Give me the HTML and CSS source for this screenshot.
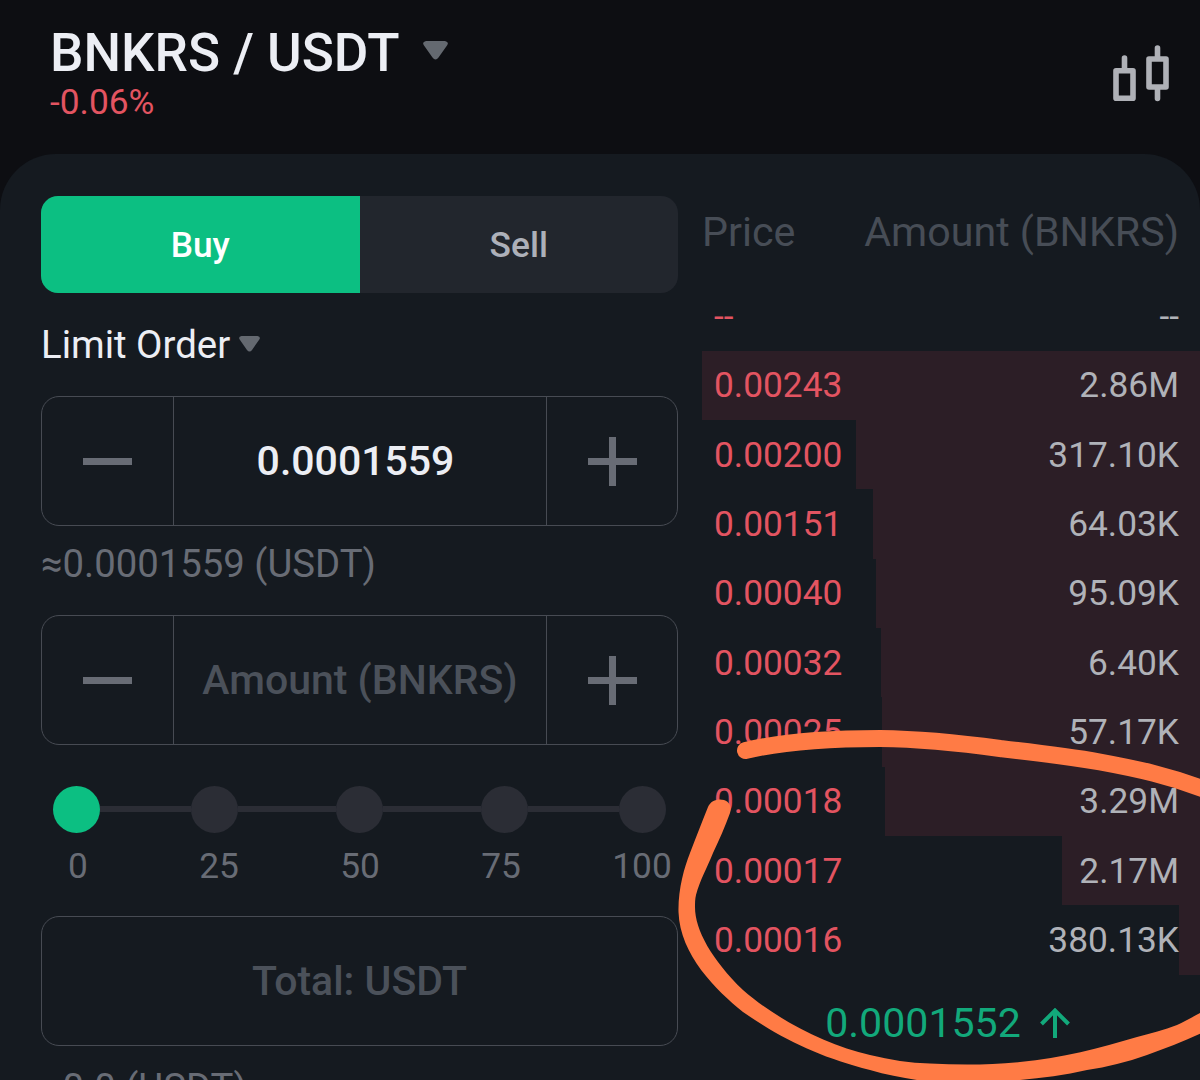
FILE: index.html
```html
<!DOCTYPE html>
<html lang="en">
<head>
<meta charset="utf-8">
<title>BNKRS / USDT</title>
<link rel="stylesheet" href="styles.css">
</head>
<body>
<header class="header">
  <div class="pair">
    <div class="pair-row">
      <h1 class="pair-name">BNKRS / USDT</h1>
      <svg class="caret caret-lg" viewBox="0 0 25 19"><path d="M3 0H22Q26.500 1 24 4.500L15.500 16.500Q12.500 20.500 9.500 16.500L1 4.500Q-1.500 1 3 0Z"/></svg>
    </div>
    <div class="change">-0.06%</div>
  </div>
  <svg class="candles" viewBox="0 0 57 57">
    <g fill="none" stroke-width="5.600" stroke-linejoin="round">
      <rect x="3" y="25.700" width="17" height="27.500"/>
      <rect x="36" y="14" width="17" height="28"/>
    </g>
    <g fill="none" stroke-width="5.600" stroke-linecap="round">
      <path d="M11.500 13V24M44.500 3V13M44.500 43V53.500"/>
    </g>
  </svg>
</header>
<main class="panel">
  <section class="form">
    <div class="tabs">
      <button class="tab tab-buy">Buy</button>
      <button class="tab tab-sell">Sell</button>
    </div>
    <div class="order-type">
      <span>Limit Order</span>
      <svg class="caret caret-sm" viewBox="0 0 25 19"><path d="M3 0H22Q26.500 1 24 4.500L15.500 16.500Q12.500 20.500 9.500 16.500L1 4.500Q-1.500 1 3 0Z"/></svg>
    </div>
    <div class="stepper">
      <button class="step"><svg viewBox="0 0 49 49"><path d="M0 24.500H49"/></svg></button>
      <div class="field field-value">0.0001559</div>
      <button class="step"><svg viewBox="0 0 49 49"><path d="M0 24.500H49M24.500 0V49"/></svg></button>
    </div>
    <div class="approx">≈0.0001559 (USDT)</div>
    <div class="stepper">
      <button class="step"><svg viewBox="0 0 49 49"><path d="M0 24.500H49"/></svg></button>
      <div class="field">Amount (BNKRS)</div>
      <button class="step"><svg viewBox="0 0 49 49"><path d="M0 24.500H49M24.500 0V49"/></svg></button>
    </div>
    <div class="slider">
      <i class="dot dot-on"></i><i class="track track-end"></i><i class="dot"></i><i class="track"></i><i class="dot"></i><i class="track"></i><i class="dot"></i><i class="track track-end"></i><i class="dot"></i>
    </div>
    <div class="marks"><span>0</span><span>25</span><span>50</span><span>75</span><span>100</span></div>
    <div class="total">Total: USDT</div>
    <div class="approx approx-total">≈0.0 (USDT)</div>
  </section>
  <section class="book">
    <div class="book-head"><span>Price</span><span>Amount (BNKRS)</span></div>
    <div class="asks">
      <div class="ask"><span class="price">--</span><span>--</span></div>
      <div class="ask"><i class="depth" style="width:498px"></i><span class="price">0.00243</span><span>2.86M</span></div>
      <div class="ask"><i class="depth" style="width:344px"></i><span class="price">0.00200</span><span>317.10K</span></div>
      <div class="ask"><i class="depth" style="width:327px"></i><span class="price">0.00151</span><span>64.03K</span></div>
      <div class="ask"><i class="depth" style="width:324px"></i><span class="price">0.00040</span><span>95.09K</span></div>
      <div class="ask"><i class="depth" style="width:319px"></i><span class="price">0.00032</span><span>6.40K</span></div>
      <div class="ask"><i class="depth" style="width:318px"></i><span class="price">0.00025</span><span>57.17K</span></div>
      <div class="ask"><i class="depth" style="width:315px"></i><span class="price">0.00018</span><span>3.29M</span></div>
      <div class="ask"><i class="depth" style="width:138px"></i><span class="price">0.00017</span><span>2.17M</span></div>
      <div class="ask"><i class="depth" style="width:21px"></i><span class="price">0.00016</span><span>380.13K</span></div>
    </div>
    <div class="last">
      <span>0.0001552</span>
      <svg class="arrow" viewBox="0 0 30 30"><path d="M15 30V3M1.500 16L15 2.500L28.500 16"/></svg>
    </div>
  </section>
</main>
<svg class="marker" viewBox="0 0 1200 1080">
  <path class="marker-line" d="M745.500 750.500C785 741 830 738.500 880 738.500C920 739 960 743 1000 748.500C1035 752.500 1066 756 1100 762C1138 769 1170 776 1206 790"/>
  <path class="marker-fill" d="M708 807C713 795 735 798 730 813C725 827 719 840 713 853C707 868 700 880 696 895C695 899 695 903 695 907C695 930 712 960 743 990C775 1018 825 1045 870 1055C890 1060 910 1063 930 1063.500C960 1065 990 1065 1020 1062C1062 1058 1100 1048 1137 1037C1151 1033 1164 1030 1177 1025C1186 1021 1194 1016 1206 1010V1031C1187 1040 1167 1048 1147 1055C1127 1062 1107 1067 1087 1070C1065 1075 1042 1078 1020 1080C990 1084 960 1085 930 1082C910 1079 890 1076 870 1070C820 1057 785 1041 743 1012C716 990 680 955 678.500 912C678 890 684 868 690 853C696 837 702 822 708 807Z"/>
</svg>
</body>
</html>
```
FILE: styles.css
```css
* { box-sizing: border-box; }
body {
  margin: 0;
  width: 1200px;
  height: 1080px;
  overflow: hidden;
  position: relative;
  background: #0d0e12;
  color: #eceef4;
  font-family: Roboto, "Liberation Sans", sans-serif;
  font-size: 35.300px;
}
button {
  border: 0;
  padding: 0;
  background: none;
  color: inherit;
  font: inherit;
}
svg { display: block; }

.header {
  height: 154px;
  padding: 22px 30px 0 50px;
  display: flex;
  justify-content: space-between;
}
.pair-row { display: flex; align-items: center; gap: 24px; height: 62px; }
.pair-name { margin: 0; font-size: 53px; font-weight: 500; line-height: 62px; white-space: nowrap; }
.caret { fill: #646970; }
.caret-lg { width: 25px; height: 19px; margin-top: -6px; }
.caret-sm { width: 21px; height: 16px; margin-top: -2px; }
.change { color: #e35461; line-height: 37px; }
.candles { width: 57px; height: 57px; margin-top: 23px; stroke: #afb1b7; }

.panel {
  height: 926px;
  padding-left: 41px;
  display: flex;
  gap: 24px;
  background: #151a20;
  border-radius: 56px 56px 0 0;
  overflow: hidden;
}
.form { width: 637px; padding-top: 42px; flex: none; }
.tabs { display: flex; height: 97px; border-radius: 17px; overflow: hidden; background: #22262d; }
.tab { flex: 1; font-weight: 500; }
.tab-buy { background: #0cbf82; color: #fff; }
.tab-sell { color: #adb0b9; }
.order-type { display: flex; align-items: center; gap: 9px; height: 103px; font-size: 38.400px; }

.stepper, .total {
  height: 130px;
  border: 1px solid #474b53;
  border-radius: 18px;
  display: flex;
  font-size: 41px;
  font-weight: 500;
  color: #4b515a;
}
.step { width: 131px; display: flex; align-items: center; justify-content: center; }
.step:last-child { width: 130px; }
.step svg { width: 49px; height: 49px; stroke: #686c75; stroke-width: 7; }
.field {
  flex: 1;
  display: flex;
  align-items: center;
  justify-content: center;
  border: solid #474b53;
  border-width: 0 1px;
  white-space: nowrap;
}
.field-value { color: #eceef4; padding-right: 9px; }
.approx { height: 89px; line-height: 75px; color: #686c75; font-size: 38.300px; white-space: nowrap; }
.slider { display: flex; align-items: center; height: 48px; margin: 40px 12px 0; }
.dot { width: 47px; height: 47px; border-radius: 50%; background: #2b2d35; flex: none; }
.dot-on { background: #0cbf82; }
.track { flex: 98; height: 6px; background: #2b2d35; }
.track-end { flex: 90.500; }
.marks {
  display: flex;
  justify-content: space-between;
  margin: 12px 6px 0 7px;
  height: 42px;
  line-height: 42px;
  color: #686c75;
}
.marks span { width: 60px; text-align: center; }
.total { margin-top: 29px; align-items: center; justify-content: center; }
.approx-total { line-height: 84px; }

.book { width: 498px; padding-top: 42px; flex: none; }
.book-head {
  display: flex;
  justify-content: space-between;
  height: 85.300px;
  line-height: 73px;
  padding-right: 21px;
  color: #474d56;
  font-size: 41.200px;
}
.ask {
  position: relative;
  display: flex;
  align-items: center;
  justify-content: space-between;
  height: 69.330px;
  padding: 0 21px 0 12px;
  color: #b0b2b8;
}
.ask span { position: relative; }
.ask .price { color: #e35461; }
.depth { position: absolute; top: 0; right: 0; bottom: 0; background: #2c1e26; }
.last {
  display: flex;
  align-items: center;
  justify-content: center;
  gap: 19px;
  height: 96px;
  padding-right: 7px;
  color: #12a97b;
  font-size: 41.100px;
}
.arrow { width: 30px; height: 30px; fill: none; stroke: #12a97b; stroke-width: 4; }

/* hand-drawn highlight over the order book */
.marker { position: absolute; left: 0; top: 0; width: 1200px; height: 1080px; pointer-events: none; }
.marker-line { fill: none; stroke: #ff7b45; stroke-width: 17; stroke-linecap: round; }
.marker-fill { fill: #ff7b45; }
```
